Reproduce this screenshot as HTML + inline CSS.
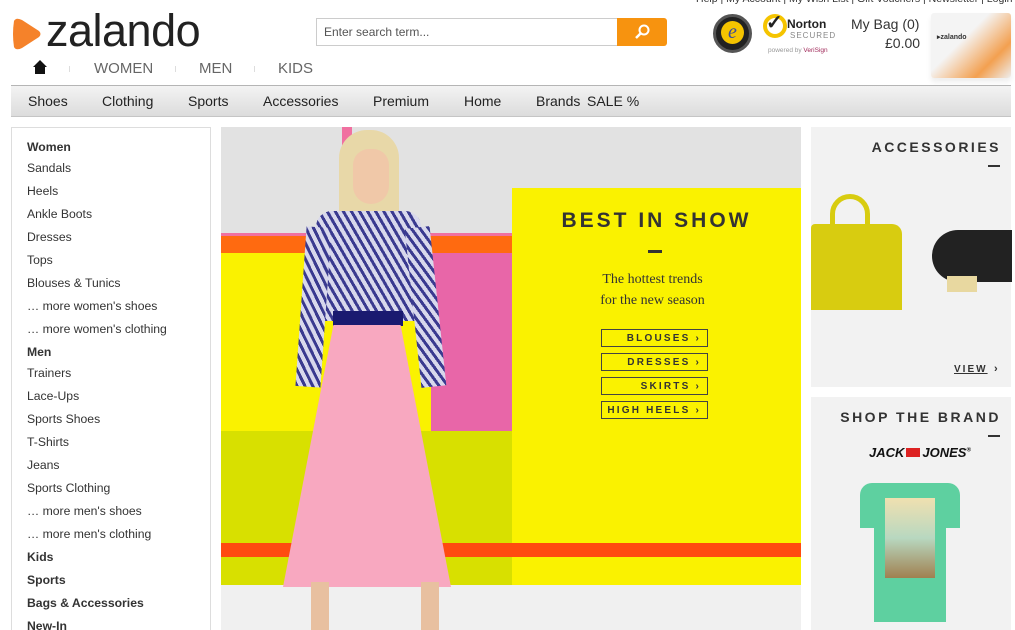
<!DOCTYPE html>
<html><head><meta charset="utf-8"><style>
*{margin:0;padding:0;box-sizing:border-box}
html,body{width:1015px;height:630px;overflow:hidden}
body{background:#fff;font-family:"Liberation Sans",Arial,sans-serif;position:relative;color:#333}
.a{position:absolute}
.side div{position:absolute;left:27px;font-size:12.2px;color:#333}
.side b{font-weight:bold}
.nav span{position:absolute;top:93px;font-size:14px;color:#222}
.btn{position:absolute;left:601px;width:107px;height:18px;border:1px solid #444;font-size:10px;font-weight:bold;letter-spacing:2.2px;text-align:right;padding-right:6px;line-height:17px;color:#333}
</style></head><body>
<div class="a" style="top:-7px;left:696px;font-size:10.5px;color:#333;white-space:nowrap">Help | My Account | My Wish List | Gift Vouchers | Newsletter | Login</div>
<svg class="a" style="left:10px;top:17px" width="32" height="34" viewBox="0 0 32 34"><path d="M4 4 Q2 17 4 30 Q6 34 12 31 L29 20 Q32 17 29 14 L12 3 Q6 0 4 4Z" fill="#f5822a"/></svg>
<div class="a" style="left:46px;top:4px;font-size:45px;color:#222;letter-spacing:-0.5px;line-height:54px">zalando</div>
<div class="a" style="left:316px;top:18px;width:302px;height:28px;border:1px solid #ccc;font-size:12px;color:#555;padding:6px 7px">Enter search term...</div>
<div class="a" style="left:617px;top:18px;width:50px;height:28px;background:#f7930f;border-radius:0 3px 3px 0"></div>
<svg class="a" style="left:633px;top:22px" width="20" height="20"><circle cx="11" cy="8" r="4.5" fill="none" stroke="#fff" stroke-width="2"/><path d="M8 11 L3 16" stroke="#fff" stroke-width="2.5"/></svg>
<svg class="a" style="left:32px;top:59px" width="16" height="16"><path d="M8 1 L15 8 L13 8 L13 15 L3 15 L3 8 L1 8Z" fill="#111"/></svg>
<div class="a" style="left:69px;top:66px;width:1px;height:6px;background:#ddd"></div>
<div class="a" style="left:175px;top:66px;width:1px;height:6px;background:#ddd"></div>
<div class="a" style="left:254px;top:66px;width:1px;height:6px;background:#ddd"></div>
<div class="a" style="left:94px;top:60px;font-size:15px;color:#666">WOMEN</div>
<div class="a" style="left:199px;top:60px;font-size:15px;color:#666">MEN</div>
<div class="a" style="left:278px;top:60px;font-size:15px;color:#666">KIDS</div>
<div class="a" style="left:713px;top:14px;width:39px;height:39px;border-radius:50%;background:#222;border:3px solid #555"></div>
<div class="a" style="left:721px;top:21px;width:23px;height:23px;border-radius:50%;background:#f5c400;font:italic 20px 'Liberation Serif',serif;color:#3a4a9a;text-align:center;line-height:22px">e</div>
<div class="a" style="left:763px;top:14px;width:24px;height:24px;border-radius:50%;border:4px solid #f5c400"></div>
<div class="a" style="left:766px;top:10px;font-size:20px;font-weight:bold;color:#222">✓</div>
<div class="a" style="left:787px;top:17px;font-size:12px;font-weight:bold;color:#222">Norton</div>
<div class="a" style="left:790px;top:31px;font-size:8px;color:#888;letter-spacing:1px">SECURED</div>
<div class="a" style="left:768px;top:47px;font-size:6.5px;color:#999">powered by <span style="color:#a02a5a">VeriSign</span></div>
<div class="a" style="left:851px;top:16px;font-size:14px;color:#333">My Bag (0)</div>
<div class="a" style="left:885px;top:35px;font-size:14px;color:#333">£0.00</div>
<div class="a" style="left:931px;top:13px;width:80px;height:65px;background:linear-gradient(135deg,#f4f4f4 40%,#f3a050 75%,#eee);border-radius:3px;box-shadow:0 4px 6px #eee"></div>
<div class="a" style="left:937px;top:33px;font-size:7px;font-weight:bold;color:#333">▸zalando</div>
<div class="a" style="left:11px;top:85px;width:1000px;height:32px;background:linear-gradient(#f3f3f3,#dcdcdc);border-top:1px solid #b5b5b5;border-bottom:1px solid #c5c5c5"></div>
<div class="nav">
<span style="left:28px">Shoes</span><span style="left:102px">Clothing</span><span style="left:188px">Sports</span><span style="left:263px">Accessories</span><span style="left:373px">Premium</span><span style="left:464px">Home</span><span style="left:536px">Brands</span><span style="left:587px">SALE %</span>
</div>
<div class="a" style="left:11px;top:127px;width:200px;height:503px;border:1px solid #ddd;border-bottom:none"></div>
<div class="side">
<div style="top:140px"><b>Women</b></div>
<div style="top:161px">Sandals</div>
<div style="top:184px">Heels</div>
<div style="top:207px">Ankle Boots</div>
<div style="top:230px">Dresses</div>
<div style="top:253px">Tops</div>
<div style="top:276px">Blouses &amp; Tunics</div>
<div style="top:299px">… more women's shoes</div>
<div style="top:322px">… more women's clothing</div>
<div style="top:345px"><b>Men</b></div>
<div style="top:366px">Trainers</div>
<div style="top:389px">Lace-Ups</div>
<div style="top:412px">Sports Shoes</div>
<div style="top:435px">T-Shirts</div>
<div style="top:458px">Jeans</div>
<div style="top:481px">Sports Clothing</div>
<div style="top:504px">… more men's shoes</div>
<div style="top:527px">… more men's clothing</div>
<div style="top:550px"><b>Kids</b></div>
<div style="top:573px"><b>Sports</b></div>
<div style="top:596px"><b>Bags &amp; Accessories</b></div>
<div style="top:619px"><b>New-In</b></div>
</div>
<div class="a" style="left:221px;top:127px;width:580px;height:503px;overflow:hidden;background:#e2e2e2">
 <div class="a" style="left:0;top:106px;width:292px;height:3px;background:#f070a0"></div>
 <div class="a" style="left:0;top:109px;width:292px;height:17px;background:#ff6a10"></div>
 <div class="a" style="left:0;top:126px;width:210px;height:178px;background:#faf200"></div>
 <div class="a" style="left:210px;top:126px;width:82px;height:178px;background:#e866a8"></div>
 <div class="a" style="left:0;top:304px;width:292px;height:112px;background:#d8e000"></div>
 <div class="a" style="left:291px;top:61px;width:289px;height:355px;background:#faf200"></div>
 <div class="a" style="left:0;top:416px;width:580px;height:14px;background:#ff4a10"></div>
 <div class="a" style="left:0;top:430px;width:292px;height:28px;background:#d8e000"></div>
 <div class="a" style="left:291px;top:430px;width:289px;height:28px;background:#faf200"></div>
 <div class="a" style="left:0;top:458px;width:580px;height:45px;background:#f0f0f0"></div>
 <div class="a" style="left:121px;top:0;width:10px;height:108px;background:#f070a0"></div>
 <div class="a" style="left:121px;top:430px;width:16px;height:28px;background:#f070a0"></div>
 <div class="a" style="left:118px;top:3px;width:60px;height:90px;background:#e8d8a8;border-radius:28px 28px 10px 10px"></div>
 <div class="a" style="left:132px;top:22px;width:36px;height:55px;background:#f0c8a8;border-radius:16px 16px 18px 18px"></div>
 <div class="a" style="left:95px;top:84px;width:105px;height:110px;background:repeating-linear-gradient(60deg,#3a3a90 0 3px,#d8d8ec 3px 7px);border-radius:16px 16px 0 0"></div>
 <div class="a" style="left:80px;top:100px;width:25px;height:160px;background:repeating-linear-gradient(60deg,#3a3a90 0 3px,#d8d8ec 3px 7px);transform:rotate(4deg)"></div>
 <div class="a" style="left:192px;top:100px;width:25px;height:160px;background:repeating-linear-gradient(60deg,#3a3a90 0 3px,#d8d8ec 3px 7px);transform:rotate(-6deg)"></div>
 <div class="a" style="left:112px;top:184px;width:70px;height:15px;background:#1a1a70"></div>
 <div class="a" style="left:62px;top:198px;width:168px;height:262px;background:#f8a8c0;clip-path:polygon(30% 0,70% 0,100% 100%,0 100%)"></div>
 <div class="a" style="left:90px;top:455px;width:18px;height:50px;background:#e8c0a0"></div>
 <div class="a" style="left:200px;top:455px;width:18px;height:50px;background:#e8c0a0"></div>
 <div class="a" style="left:291px;top:82px;width:289px;text-align:center;font-size:21px;font-weight:bold;letter-spacing:3px;color:#333">BEST IN SHOW</div>
 <div class="a" style="left:427px;top:123px;width:14px;height:3px;background:#333"></div>
 <div class="a" style="left:291px;top:142px;width:289px;text-align:center;font:14px/21px 'Liberation Serif',serif;color:#333;padding-right:8px">The hottest trends<br>for the new season</div>
</div>
<div class="btn" style="top:329px">BLOUSES ›</div>
<div class="btn" style="top:353px">DRESSES ›</div>
<div class="btn" style="top:377px">SKIRTS ›</div>
<div class="btn" style="top:401px">HIGH HEELS ›</div>
<div class="a" style="left:811px;top:127px;width:200px;height:260px;background:#f2f2f2"></div>
<div class="a" style="left:811px;top:139px;width:190px;text-align:right;font-size:14px;font-weight:bold;letter-spacing:2.5px;color:#333">ACCESSORIES</div>
<div class="a" style="left:988px;top:165px;width:12px;height:2px;background:#333"></div>
<div class="a" style="left:811px;top:224px;width:91px;height:86px;background:#d8cc10;border-radius:4px 10px 0 0"></div>
<div class="a" style="left:830px;top:194px;width:40px;height:40px;border:5px solid #d8cc10;border-radius:20px 20px 0 0"></div>
<div class="a" style="left:932px;top:230px;width:80px;height:52px;background:#222;border-radius:26px 0 0 26px"></div>
<div class="a" style="left:947px;top:276px;width:30px;height:16px;background:#e8d8a0"></div>
<div class="a" style="left:954px;top:364px;font-size:10px;font-weight:bold;letter-spacing:2px;color:#333;text-decoration:underline">VIEW</div>
<div class="a" style="left:994px;top:363px;font-size:11px;font-weight:bold">›</div>
<div class="a" style="left:811px;top:397px;width:200px;height:233px;background:#f2f2f2"></div>
<div class="a" style="left:811px;top:409px;width:190px;text-align:right;font-size:14px;font-weight:bold;letter-spacing:2.5px;color:#333">SHOP THE BRAND</div>
<div class="a" style="left:988px;top:435px;width:12px;height:2px;background:#333"></div>
<div class="a" style="left:869px;top:445px;font-size:13px;font-weight:bold;font-style:italic;color:#111;white-space:nowrap">JACK<span style="display:inline-block;width:14px;height:9px;background:#d22;margin:0 2px"></span>JONES<sup style="font-size:6px">®</sup></div>
<div class="a" style="left:860px;top:483px;width:100px;height:45px;background:#5ed0a0;border-radius:12px 12px 0 0"></div>
<div class="a" style="left:874px;top:500px;width:72px;height:122px;background:#5ed0a0"></div>
<div class="a" style="left:885px;top:498px;width:50px;height:80px;background:linear-gradient(#f0e0b0,#b8d8c0 50%,#a08050)"></div>
</body></html>
